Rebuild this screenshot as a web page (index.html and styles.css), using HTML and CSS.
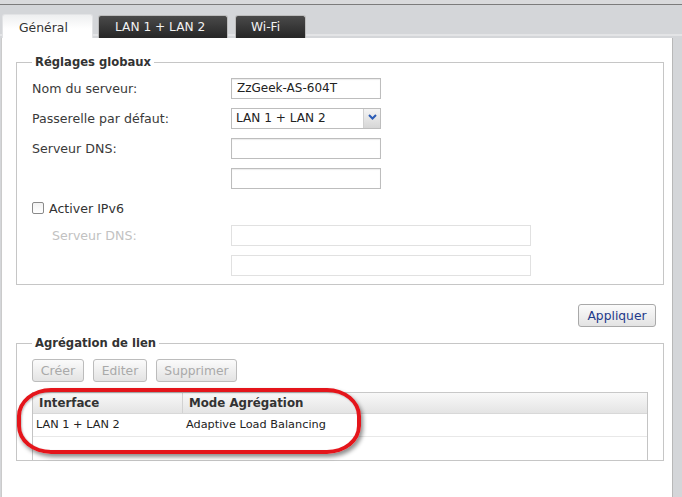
FILE: index.html
```html
<!DOCTYPE html>
<html lang="fr">
<head>
<meta charset="utf-8">
<title>Réseau</title>
<link rel="stylesheet" href="styles.css">
</head>
<body>
<div class="topline"></div>
<div class="tabbar">
  <div class="tab active">Général</div>
  <div class="tab dark tab-lan">LAN 1 + LAN 2</div>
  <div class="tab dark tab-wifi">Wi-Fi</div>
</div>
<div class="panel">
  <fieldset class="group group-global">
    <legend>Réglages globaux</legend>
    <div class="form">
      <div class="label">Nom du serveur:</div>
      <div class="input">ZzGeek-AS-604T</div>
      <div class="label">Passerelle par défaut:</div>
      <div class="select"><span class="select-text">LAN 1 + LAN 2</span><span class="select-arrow"><svg width="9" height="6" viewBox="0 0 9 6"><polyline points="1,1 4.5,4.5 8,1" fill="none" stroke="#2a5bb5" stroke-width="2"/></svg></span></div>
      <div class="label">Serveur DNS:</div>
      <div class="input"></div>
      <div class="label"></div>
      <div class="input"></div>
      <div class="check-row"><span class="checkbox"></span><span>Activer IPv6</span></div>
      <div class="label disabled">Serveur DNS:</div>
      <div class="input wide off"></div>
      <div class="label"></div>
      <div class="input wide off"></div>
    </div>
  </fieldset>
  <div class="apply-row"><button class="btn apply">Appliquer</button></div>
  <fieldset class="group group-agg">
    <legend>Agrégation de lien</legend>
    <div class="toolbar">
      <button class="btn off b-create">Créer</button>
      <button class="btn off b-edit">Editer</button>
      <button class="btn off b-del">Supprimer</button>
    </div>
    <div class="grid">
      <div class="grid-head">
        <div class="c1">Interface</div>
        <div class="c2">Mode Agrégation</div>
      </div>
      <div class="grid-row">
        <div class="c1">LAN 1 + LAN 2</div>
        <div class="c2">Adaptive Load Balancing</div>
      </div>
      <div class="ring"></div>
    </div>
  </fieldset>
</div>
</body>
</html>
```
FILE: styles.css
```css
* { box-sizing: border-box; }
html, body { margin: 0; padding: 0; }
body {
  background: #d4d6d9;
  font-family: "DejaVu Sans", Verdana, sans-serif;
  font-size: 12px;
  color: #333;
  overflow: hidden;
}
.topline {
  height: 5px;
  background: #d9dadc;
  border-bottom: 1px solid #7c7c7c;
}
.tabbar {
  height: 33px;
  display: flex;
  align-items: flex-end;
  padding-left: 2px;
  background: linear-gradient(#d4d6d9 0, #d4d6d9 29px, #e3e4e6 29px, #e3e4e6 31px, #d4d6d9 31px);
}
.tab {
  height: 23px;
  line-height: 23px;
  padding-left: 16px;
  border-radius: 3px 3px 0 0;
  font-size: 12.2px;
  white-space: nowrap;
}
.tab.active {
  width: 91px;
  height: 24px;
  line-height: 26px;
  background: linear-gradient(#eeeff0, #ffffff 60%);
  border: 1px solid #e2e3e5;
  border-bottom: none;
  color: #333;
  font-size: 12.4px;
}
.tab.dark {
  background: linear-gradient(#4a4a4a, #262626);
  border: 1px solid #bcbcbc;
  border-bottom: none;
  color: #f2f2f2;
}
.tab-lan { width: 130px; margin-left: 5px; }
.tab-wifi { width: 71px; margin-left: 7px; padding-left: 15px; }

.panel {
  width: 672px;
  min-height: calc(100vh - 38px);
  margin-left: 1px;
  background: #fff;
  border-left: 1px solid #cbcbcb;
  border-right: 1px solid #b8b8b8;
  padding: 17px 8px 0 14px;
}
.group {
  margin: 0;
  border: 1px solid #c6c6c6;
  padding: 9px 0 8px 15px;
  min-width: 0;
}
.group legend {
  padding: 0 3px;
  font-weight: bold;
  font-size: 11.6px;
  line-height: 14px;
  color: #333;
}
.form {
  display: grid;
  grid-template-columns: 199px 1fr;
  row-gap: 9px;
  align-items: center;
}
.label {
  font-size: 12.6px;
  color: #3a3a3a;
  height: 21px;
  line-height: 21px;
}
.label.disabled { color: #c2c2c2; padding-left: 20px; }
.input {
  width: 150px;
  height: 21px;
  border: 1px solid #bdbdbd;
  box-shadow: inset 0 1px 1px #ececec;
  padding-left: 5px;
  line-height: 19px;
  font-size: 12px;
  color: #222;
}
.input.wide { width: 300px; }
.input.off { border-color: #e1e1e1; box-shadow: none; background: #fff; }
.select {
  width: 150px;
  height: 21px;
  border: 1px solid #bdbdbd;
  display: flex;
  align-items: stretch;
}
.select-text {
  flex: 1;
  padding-left: 4px;
  line-height: 19px;
  font-size: 12.1px;
  color: #222;
}
.select-arrow {
  width: 17px;
  background: linear-gradient(#f4f4f4, #d6d6d6);
  border-left: 1px solid #d0d0d0;
  display: flex;
  justify-content: center;
  padding-top: 5px;
}
.check-row {
  grid-column: 1 / 3;
  height: 18px;
  padding-top: 2px;
  display: flex;
  align-items: center;
  gap: 5px;
  font-size: 12.6px;
  color: #333;
}
.checkbox {
  width: 12px;
  height: 12px;
  border: 1px solid #8a8a8a;
  border-radius: 2px;
  background: linear-gradient(#f2f2f2, #fff);
}
.apply-row {
  display: flex;
  justify-content: flex-end;
  padding: 19px 8px 0 0;
  margin-bottom: 9px;
}
.btn {
  height: 23px;
  border: 1px solid #a9a9a9;
  border-radius: 3px;
  background: linear-gradient(#fbfbfb, #e3e3e3);
  font-family: "DejaVu Sans", Verdana, sans-serif;
  font-size: 12.3px;
  padding: 0;
  margin: 0;
}
.apply { width: 78px; color: #1f3a8a; }
.btn.off { color: #a9a9a9; border-color: #bcbcbc; }
.b-create { width: 52px; font-size: 12.6px; }
.b-edit { width: 54px; }
.b-del { width: 81px; }
.group-agg { padding: 9px 15px 0 15px; }
.toolbar { display: flex; gap: 9px; }
.grid {
  position: relative;
  margin-top: 10px;
  height: 68px;
  border-left: 1px solid #c4c4c4;
  border-right: 1px solid #c4c4c4;
}
.grid-head {
  display: flex;
  height: 22px;
  border-top: 1px solid #c8c8c8;
  border-bottom: 1px solid #d8d8d8;
  background: linear-gradient(#f8f8f8, #e4e4e4);
  font-weight: bold;
  font-size: 11.8px;
  color: #333;
  line-height: 20px;
}
.grid-head .c1 { width: 150px; padding-left: 6px; border-right: 1px solid #d2d2d2; }
.grid-head .c2 { padding-left: 6px; }
.grid-row {
  display: flex;
  height: 23px;
  border-bottom: 1px solid #e8e8e8;
  font-size: 11.3px;
  color: #222;
  line-height: 22px;
}
.grid-row .c1 { width: 150px; padding-left: 3px; }
.grid-row .c2 { padding-left: 3px; }
.ring {
  position: absolute;
  left: -16px;
  top: -4px;
  width: 344px;
  height: 66px;
  border: 4px solid #e4151b;
  border-radius: 34px / 28px;
  box-shadow: 2px 3px 4px rgba(0,0,0,0.45), inset 1px 1px 2px rgba(0,0,0,0.25);
}
```
